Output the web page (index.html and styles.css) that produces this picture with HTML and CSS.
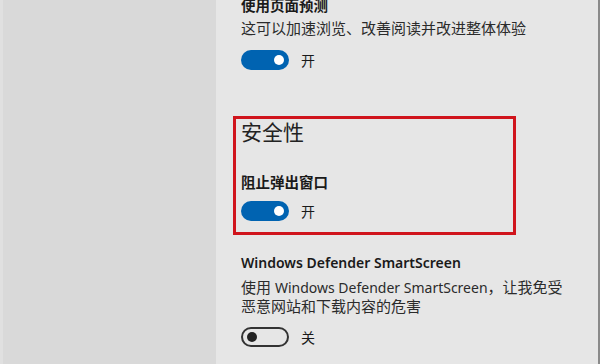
FILE: index.html
```html
<!DOCTYPE html>
<html lang="zh-CN">
<head>
<meta charset="utf-8">
<link rel="stylesheet" href="styles.css">
</head>
<body>
<div class="window">
  <aside class="sidebar"></aside>
  <main class="main">
    <div class="setting-title first">使用页面预测</div>
    <div class="desc desc-1">这可以加速浏览、改善阅读并改进整体体验</div>
    <div class="toggle-row row-1">
      <span class="toggle on"><span class="knob"></span></span>
      <span class="state">开</span>
    </div>

    <section class="highlight">
      <h2 class="section-title">安全性</h2>
      <div class="setting-title popup">阻止弹出窗口</div>
      <div class="toggle-row row-2">
        <span class="toggle on"><span class="knob"></span></span>
        <span class="state">开</span>
      </div>
    </section>

    <div class="setting-title smart">Windows Defender SmartScreen</div>
    <div class="desc desc-2">使用 <span class="latin">Windows Defender SmartScreen</span>，让我免受<br>恶意网站和下载内容的危害</div>
    <div class="toggle-row row-3">
      <span class="toggle off"><span class="knob"></span></span>
      <span class="state">关</span>
    </div>
  </main>
</div>
</body>
</html>
```
FILE: styles.css
```css
* { box-sizing: border-box; }
html, body {
  margin: 0;
  padding: 0;
  width: 600px;
  height: 364px;
  overflow: hidden;
  background: #e6e6e6;
  font-family: "Noto Sans", "Noto Sans CJK SC", sans-serif;
  color: #1c1c1c;
}
.window {
  display: flex;
  width: 600px;
  height: 364px;
}
.sidebar {
  width: 216px;
  flex: none;
  background: #d9d9d9;
  border-left: 3px solid #e0e0e0;
}
.main {
  flex: 1;
  padding-left: 25px;
  border-right: 2px solid #8a8a8a;
  background: #e6e6e6;
}
.setting-title {
  font-size: 14.5px;
  font-weight: 700;
  line-height: 20px;
  color: #1a1a1a;
}
.first { margin-top: -5px; }
.desc {
  font-size: 15px;
  line-height: 19px;
  color: #2b2b2b;
}
.desc .latin { font-size: 14px; }
.desc-1 { margin-top: 4px; }
.toggle-row {
  display: flex;
  align-items: center;
  height: 20px;
}
.row-1 { margin-top: 12px; }
.toggle {
  position: relative;
  width: 48px;
  height: 20px;
  border-radius: 10px;
  flex: none;
}
.toggle.on { background: #0063b1; }
.toggle.off { border: 2px solid #333; background: transparent; }
.knob {
  position: absolute;
  top: 5px;
  width: 10px;
  height: 10px;
  border-radius: 50%;
}
.toggle.on .knob { right: 5px; background: #fff; }
.toggle.off .knob { left: 4px; top: 3px; background: #222; }
.state {
  margin-left: 12px;
  font-size: 14px;
  color: #1a1a1a;
}
.highlight {
  margin: 46px 0 0 -8px;
  width: 283px;
  border: 3px solid #d0141c;
  padding: 0 0 11px 5px;
}
.section-title {
  margin: 0;
  font-size: 21px;
  font-weight: 400;
  line-height: 26px;
  color: #222;
}
.popup { margin-top: 27px; }
.row-2 { margin-top: 9px; }
.smart { margin-top: 18px; font-weight: 600; font-size: 14px; }
.desc-2 { margin-top: 5px; }
.row-3 { margin-top: 11px; }
```
